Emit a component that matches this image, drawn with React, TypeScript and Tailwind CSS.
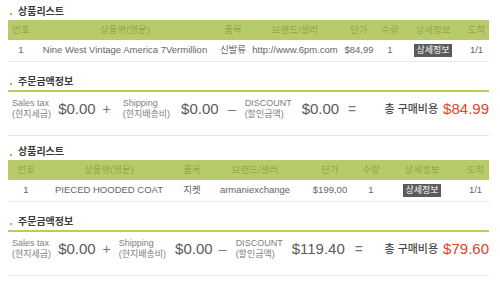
import React from 'react';

type Col = { w: string; h: string };

const cols1: Col[] = [
  { w: 'w-[26px]', h: '번호' },
  { w: 'w-[182px]', h: '상품명(영문)' },
  { w: 'w-[34px]', h: '품목' },
  { w: 'w-[90px]', h: '브랜드/셀러' },
  { w: 'w-[38px]', h: '단가' },
  { w: 'w-[24px]', h: '수량' },
  { w: 'w-[62px]', h: '상세정보' },
  { w: 'w-[25px]', h: '도착' },
];

const cols2: Col[] = [
  { w: 'w-[36px]', h: '번호' },
  { w: 'w-[130px]', h: '상품명(영문)' },
  { w: 'w-[36px]', h: '품목' },
  { w: 'w-[90px]', h: '브랜드/셀러' },
  { w: 'w-[60px]', h: '단가' },
  { w: 'w-[22px]', h: '수량' },
  { w: 'w-[80px]', h: '상세정보' },
  { w: 'w-[27px]', h: '도착' },
];

const Title = ({ children, className = '' }: { children: React.ReactNode; className?: string }) => (
  <div className={`flex items-center pl-[2px] leading-[14px] ${className}`}>
    <span className="w-[2px] h-[2px] bg-[#a3bf4f] mt-[5px] mr-[6px]" />
    <span className="text-[10px] font-bold text-[#3a3a3a]">{children}</span>
  </div>
);

const Table = ({ cols, row }: { cols: Col[]; row: string[] }) => (
  <div>
    <div className="flex h-[20px] items-center bg-[#b8cb6b] text-[9.5px] text-[#93a646]">
      {cols.map(c => (
        <div key={c.h} className={`${c.w} text-center whitespace-nowrap`}>
          {c.h}
        </div>
      ))}
    </div>
    <div className="flex h-[22px] items-center border-b border-[#e8e8e8] text-[9.5px] text-[#666]">
      {cols.map((c, i) => (
        <div key={c.h} className={`${c.w} flex justify-center whitespace-nowrap`}>
          {i === 6 ? (
            <span className="bg-[#5a5a5a] text-white text-[9px] leading-[13px] px-[2px]">상세정보</span>
          ) : (
            row[i]
          )}
        </div>
      ))}
    </div>
  </div>
);

const Label = ({ a, b, className = '' }: { a: string; b: string; className?: string }) => (
  <div className={`text-[9px] leading-[11px] text-[#808080] whitespace-nowrap ${className}`}>
    <div>{a}</div>
    <div>{b}</div>
  </div>
);

const Amt = ({ children, className = '' }: { children: React.ReactNode; className?: string }) => (
  <span className={`text-[15px] text-[#5a5a5a] whitespace-nowrap ${className}`}>{children}</span>
);

const Op = ({ children, className = '' }: { children: React.ReactNode; className?: string }) => (
  <span className={`text-[14px] text-[#777] text-center ${className}`}>{children}</span>
);

const Total = ({ value }: { value: string }) => (
  <div className="ml-auto flex items-center gap-[5px] whitespace-nowrap">
    <span className="text-[11px] font-medium text-[#4a4a4a]">총 구매비용</span>
    <span className="text-[15px] text-[#e0442c]">{value}</span>
  </div>
);

export default function App() {
  return (
    <div className="w-[500px] h-[284px] bg-white pl-[8px] pr-[11px] overflow-hidden font-['Liberation_Sans','Noto_Sans_CJK_KR',sans-serif]">
      <Title className="h-[20px] pt-[3px]">상품리스트</Title>
      <Table
        cols={cols1}
        row={['1', 'Nine West Vintage America 7Vermillion', '신발류', 'http://www.6pm.com', '$84,99', '1', '', '1/1']}
      />

      <Title className="h-[28px] pt-[11px]">주문금액정보</Title>
      <div className="h-[2px] bg-[#b9cd5e]" />
      <div className="flex h-[44px] items-center pb-[9px] pl-[4px] border-b border-[#e5e5e5]">
        <Label a="Sales tax" b="(현지세금)" />
        <Amt className="ml-[7px]">$0.00</Amt>
        <Op className="w-[22px]">+</Op>
        <Label className="ml-[5px]" a="Shipping" b="(현지배송비)" />
        <Amt className="ml-[11px]">$0.00</Amt>
        <Op className="w-[26px]">–</Op>
        <Label a="DISCOUNT" b="(할인금액)" />
        <Amt className="ml-[10px]">$0.00</Amt>
        <Op className="w-[26px]">=</Op>
        <Total value="$84.99" />
      </div>

      <Title className="h-[24px] pt-[8px]">상품리스트</Title>
      <Table
        cols={cols2}
        row={['1', 'PIECED HOODED COAT', '지켓', 'armaniexchange', '$199,00', '1', '', '1/1']}
      />

      <Title className="h-[28px] pt-[11px]">주문금액정보</Title>
      <div className="h-[2px] bg-[#b9cd5e]" />
      <div className="flex h-[44px] items-center pb-[9px] pl-[4px] border-b border-[#e5e5e5]">
        <Label a="Sales tax" b="(현지세금)" />
        <Amt className="ml-[7px]">$0.00</Amt>
        <Op className="w-[22px]">+</Op>
        <Label className="ml-[1px]" a="Shipping" b="(현지배송비)" />
        <Amt className="ml-[9px]">$0.00</Amt>
        <Op className="w-[20px]">–</Op>
        <Label className="ml-[3px]" a="DISCOUNT" b="(할인금액)" />
        <Amt className="ml-[9px]">$119.40</Amt>
        <Op className="w-[28px]">=</Op>
        <Total value="$79.60" />
      </div>
    </div>
  );
}
